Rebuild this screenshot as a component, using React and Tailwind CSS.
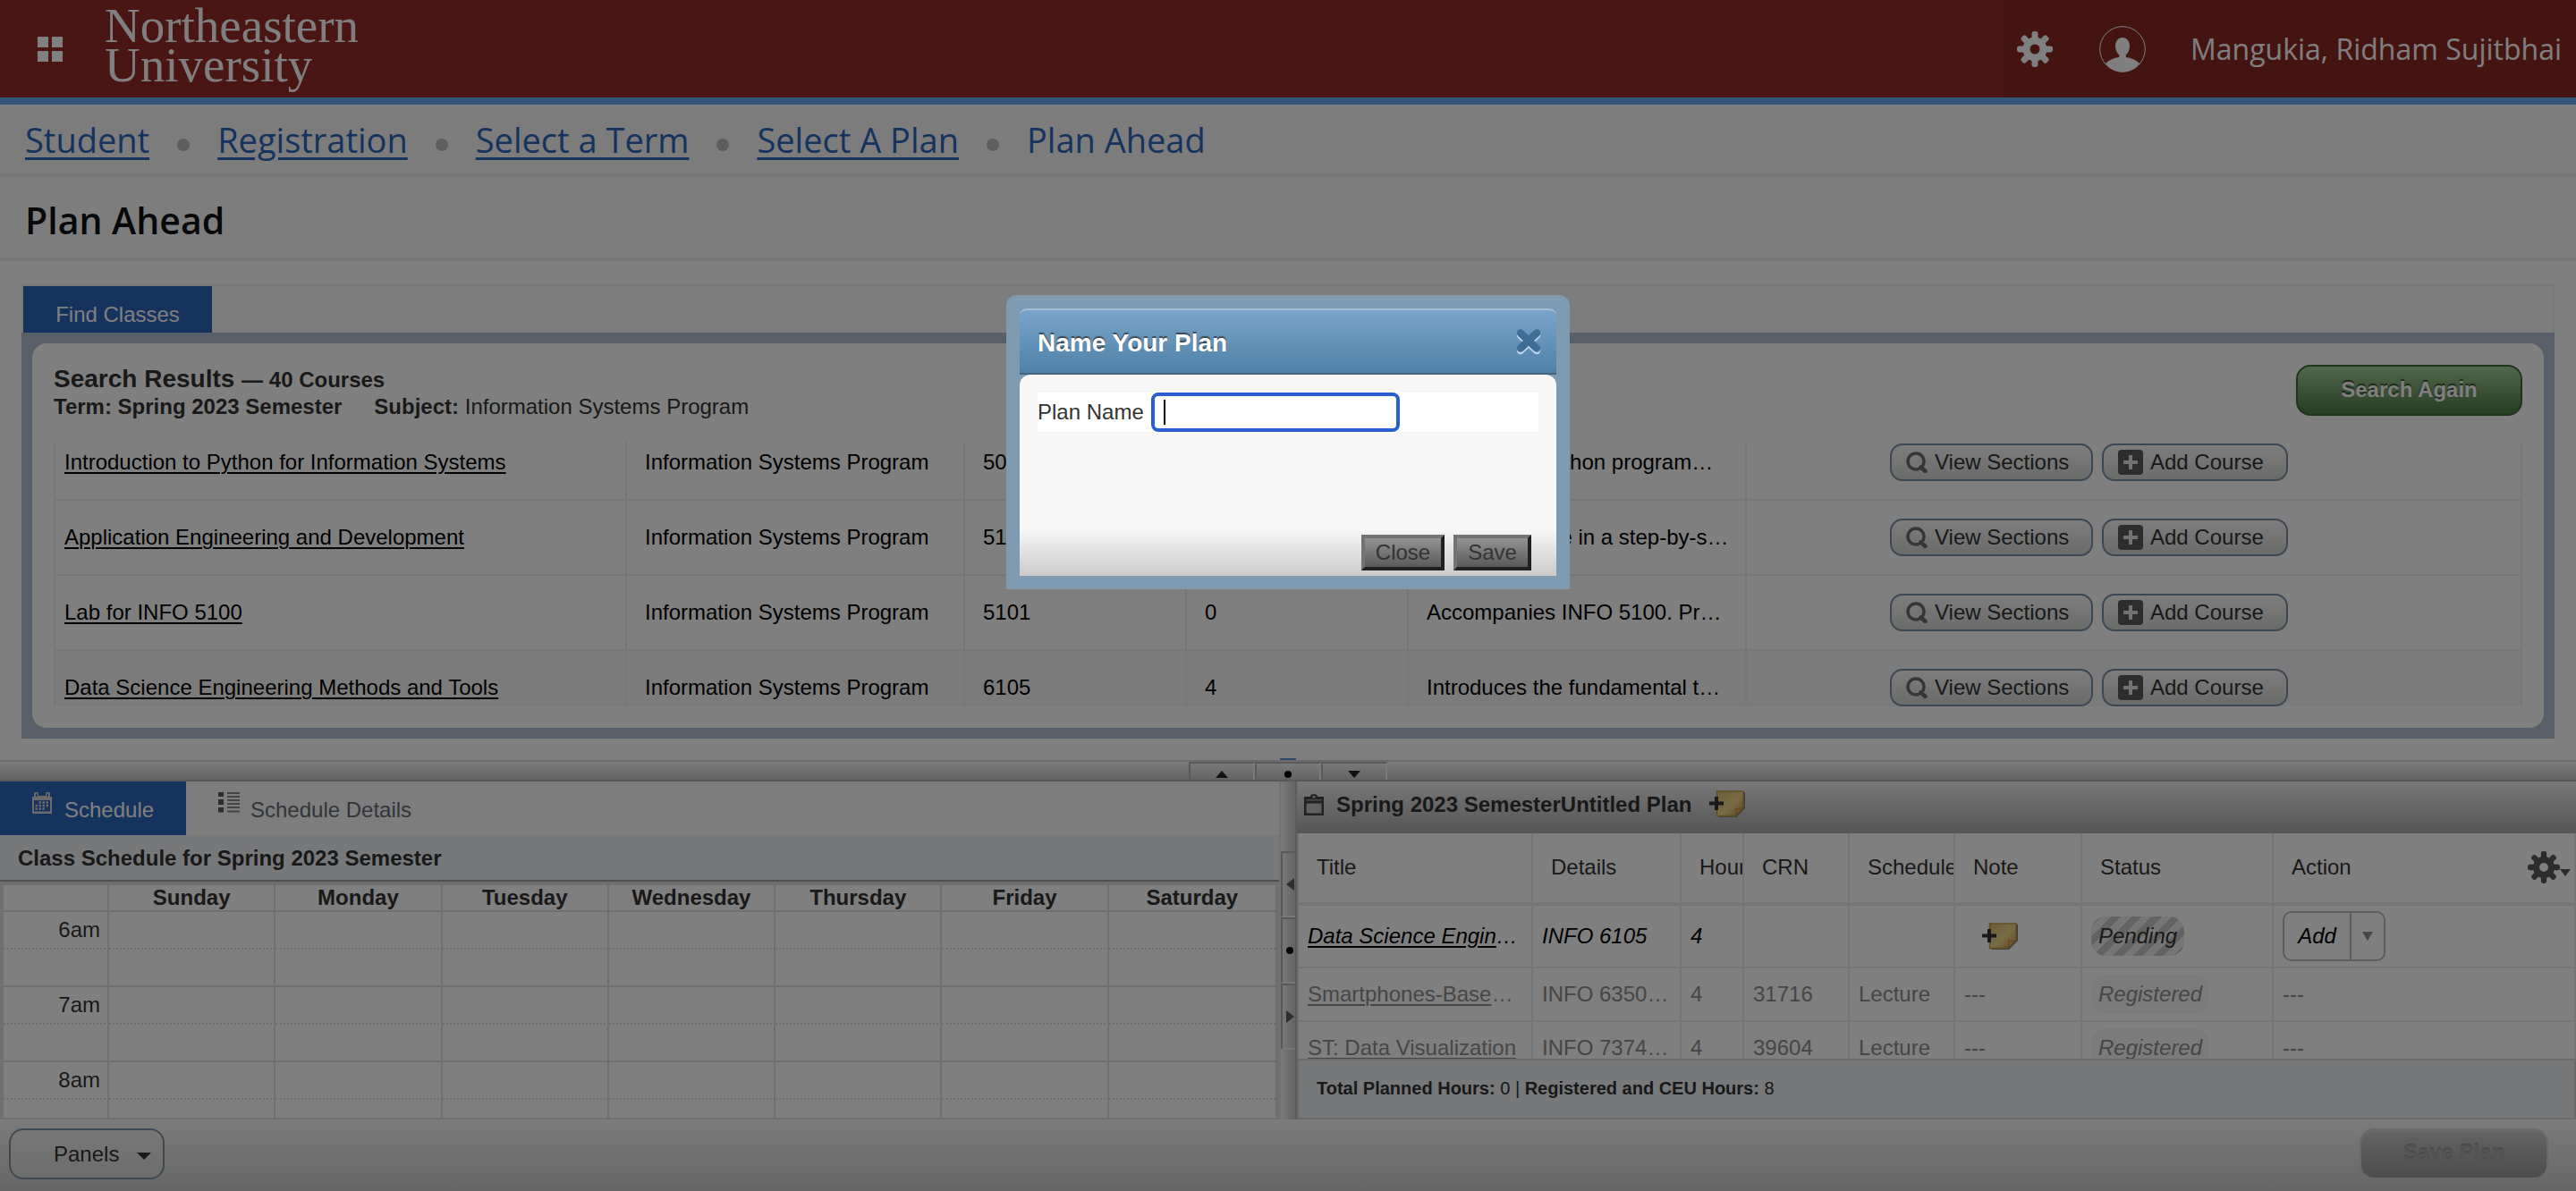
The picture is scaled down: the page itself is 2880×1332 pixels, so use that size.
import React from "react";

const crumbs = ["Student", "Registration", "Select a Term", "Select A Plan"];

const courses = [
  { title: "Introduction to Python for Information Systems", number: "5002", hours: "4", description: "Introducing Python program…" },
  { title: "Application Engineering and Development", number: "5100", hours: "4", description: "Builds software in a step-by-s…" },
  { title: "Lab for INFO 5100", number: "5101", hours: "0", description: "Accompanies INFO 5100. Pr…" },
  { title: "Data Science Engineering Methods and Tools", number: "6105", hours: "4", description: "Introduces the fundamental t…", shaded: true },
];

const days = ["Sunday", "Monday", "Tuesday", "Wednesday", "Thursday", "Friday", "Saturday"];
const times = ["6am", "7am", "8am"];

const registered = [
  { title: "Smartphones-Base", more: "…", details: "INFO 6350…", hours: "4", crn: "31716", type: "Lecture" },
  { title: "ST: Data Visualization", more: "", details: "INFO 7374…", hours: "4", crn: "39604", type: "Lecture" },
];

const planColumns = ["Title", "Details", "Hours", "CRN", "Schedule", "Note", "Status"];

function Gear({ className }) {
  return (
    <svg viewBox="0 0 40 40" className={className} aria-hidden="true">
      <circle cx="20" cy="20" r="9.5" fill="none" stroke="currentColor" strokeWidth="8" />
      {[0, 45, 90, 135, 180, 225, 270, 315].map((a) => (
        <rect key={a} x="16.5" y="0" width="7" height="10" rx="2.4" fill="currentColor" transform={`rotate(${a} 20 20)`} />
      ))}
    </svg>
  );
}

function GridIcon() {
  return (
    <svg viewBox="0 0 28 28" className="size-7" fill="currentColor" aria-hidden="true">
      <path d="M0 0h12v12H0zM16 0h12v12H16zM0 16h12v12H0zM16 16h12v12H16z" />
    </svg>
  );
}

function Avatar() {
  return (
    <svg viewBox="0 0 52 52" className="size-[52px]" aria-hidden="true">
      <circle cx="26" cy="26" r="25.3" fill="none" stroke="#fff" strokeWidth="1" />
      <path
        fill="#fff"
        d="M26 13c4.600 0 8 4 8 9.600 0 4.400-2 8-4.200 10v2.400c6 .8 11 3 15.400 7A25.300 25.300 0 0 1 26 51.500 25.300 25.300 0 0 1 6.800 42c4.400-4 9.400-6.200 15.400-7v-2.400C20 30.600 18 27 18 22.600 18 17 21.400 13 26 13z"
      />
    </svg>
  );
}

function SearchIcon() {
  return (
    <svg viewBox="0 0 24 24" className="size-6" fill="none" stroke="#6c6c6c" aria-hidden="true">
      <circle cx="11" cy="11" r="9" strokeWidth="3.500" />
      <path d="M16.500 17.500l5 4.500" strokeWidth="4.500" strokeLinecap="round" />
    </svg>
  );
}

function PlusSquare() {
  return (
    <svg viewBox="0 0 28 28" className="size-7" aria-hidden="true">
      <rect width="28" height="28" rx="4" fill="#5a5a5a" />
      <path d="M14 6v16M6 14h16" stroke="#e4e4e4" strokeWidth="4" />
    </svg>
  );
}

function CalendarIcon() {
  return (
    <svg viewBox="0 0 22 24" className="h-6 w-[22px]" aria-hidden="true">
      <path fill="#d6d6d6" d="M0 5h2V1.500C2 .7 2.700 0 3.500 0h2C6.300 0 7 .7 7 1.500V4h8V1.500c0-.8.7-1.500 1.500-1.500h2c.8 0 1.500.7 1.500 1.500V5h2v19H0z" />
      <path fill="#2c66ba" d="M2 9h18v12.500H2zM4 1.500h1.500V5H4zM16.500 1.500H18V5h-1.500z" />
      <path stroke="#d6d6d6" strokeWidth="2.500" strokeDasharray="2.500 1.500" d="M7.500 11.500h11M3.500 15h15M3.500 18.500h11" />
    </svg>
  );
}

function ListIcon() {
  return (
    <svg viewBox="0 0 24 24" className="size-6" aria-hidden="true">
      <path fill="#5a5a5a" d="M0 0h6v5H0zM0 8h6v6H0zM0 17h6v5.500H0z" />
      <path stroke="#8a8a8a" strokeWidth="1.800" d="M10 1h14M10 5h14M10 9h14M10 13h14M10 17h14M10 21.500h14" />
    </svg>
  );
}

function ClipboardIcon() {
  return (
    <svg viewBox="0 0 22 24" className="h-6 w-[22px]" aria-hidden="true">
      <path fill="#454545" d="M0 3h7V2c.8-1.300 2-2 4-2s3.200.7 4 2v1h7v21H0z" />
      <path fill="#c0c0c0" d="M9.500 2h3v2.400h-3zM2.500 10.500h17V21.500h-17z" />
      <path stroke="#9a9a9a" strokeWidth="1.500" d="M2.500 6.800h17" />
    </svg>
  );
}

function NoteIcon() {
  return (
    <svg viewBox="0 0 40 30" className="h-[30px] w-10" aria-hidden="true">
      <defs>
        <linearGradient id="note" x1="0" y1="0" x2="1" y2="1">
          <stop offset="0" stopColor="#d8bd6c" />
          <stop offset="0.55" stopColor="#f0d88e" />
          <stop offset="1" stopColor="#c08c3c" />
        </linearGradient>
      </defs>
      <path fill="#7c7c7c" d="M11 2h29v18l-10 10H11z" />
      <path fill="url(#note)" stroke="#c79a4a" strokeWidth="1.500" d="M8.500 1h29.500v18l-9 9.500H8.500z" />
      <path fill="#e4b75e" stroke="#b98a3a" d="M29 28.500c1.500-3 1.500-6 .5-8.500 3 1 6 .5 8.500-1z" />
      <path stroke="#333" strokeWidth="4" d="M8 7v15M0 14.500h16" />
    </svg>
  );
}

function Triangle({ dir, className }) {
  const d = { up: "M0 10L8 0l8 10z", down: "M0 0h16L8 10z" }[dir];
  return (
    <svg viewBox="0 0 16 10" className={className} fill="currentColor" preserveAspectRatio="none" aria-hidden="true">
      <path d={d} />
    </svg>
  );
}

function SideTriangle({ dir }) {
  return (
    <svg viewBox="0 0 9 14" className="h-3.5 w-[9px]" fill="#5c5c5c" aria-hidden="true">
      <path d={dir === "left" ? "M9 0v14L0 7z" : "M0 0v14l9-7z"} />
    </svg>
  );
}

function Header() {
  return (
    <header className="flex h-[117px] shrink-0 items-stretch justify-between border-b-8 border-[#68aaf6] bg-[#922c26] text-white">
      <div className="flex items-center pl-[42px]">
        <button aria-label="Menu"><GridIcon /></button>
        <a href="#home" className="ml-[47px] pb-2 font-['Liberation_Serif',serif] text-[55px] leading-[44px]">
          Northeastern
          <br />
          University
        </a>
      </div>
      <div className="flex items-center bg-[#882822] pr-4 pl-4 font-['Open_Sans',sans-serif]">
        <button aria-label="Settings"><Gear className="size-10" /></button>
        <button aria-label="Profile" className="ml-[52px]"><Avatar /></button>
        <span className="ml-[50px] text-[32px] leading-[44px]">Mangukia, Ridham Sujitbhai</span>
      </div>
    </header>
  );
}

function Breadcrumbs() {
  return (
    <nav className="flex h-[81px] shrink-0 items-center border-b-4 border-[#eee] bg-[#f9f9f9] px-7 font-['Open_Sans',sans-serif] text-[38px] leading-[54px] text-[#2b66bd]">
      {crumbs.map((c) => (
        <React.Fragment key={c}>
          <a href="#crumb" className="underline decoration-[3px] underline-offset-[5px]">{c}</a>
          <span className="mx-[31px] mt-3 size-3.5 rounded-full bg-[#bcbcbc]" />
        </React.Fragment>
      ))}
      <span>Plan Ahead</span>
    </nav>
  );
}

function CourseButton({ icon, width, children }) {
  return (
    <button className={`flex h-[42px] items-center gap-2 rounded-[14px] border-2 border-[#7c90a4] bg-linear-to-b from-[#fafafa] to-[#d4d8d4] pl-4 text-[#333] ${width}`}>
      {icon}
      {children}
    </button>
  );
}

function SearchResults() {
  const cell = "overflow-hidden border-r-2 border-b-2 border-[#eee] pl-5 whitespace-nowrap";
  return (
    <section className="shrink-0 px-6 pt-[26px] pb-6">
      <div className="flex h-[54px] border-2 border-b-0 border-[#f0f0f0] bg-[#fafafa]">
        <button className="w-[211px] bg-[#2c66ba] pt-3 text-white">Find Classes</button>
      </div>
      <div className="bg-[#b3bfd1] p-3">
        <div className="rounded-2xl bg-white p-6">
          <div className="flex h-[86px] items-start justify-between text-[#333]">
            <div>
              <h2 className="text-[28px] leading-8 font-bold">
                Search Results <span className="text-2xl leading-8">— 40 Courses</span>
              </h2>
              <p className="flex gap-9 leading-7">
                <b>Term: Spring 2023 Semester</b>
                <span><b>Subject:</b> Information Systems Program</span>
              </p>
            </div>
            <button className="h-[57px] w-[253px] rounded-2xl border-2 border-[#3f6a35] bg-linear-to-b from-[#a4d09a] to-[#4a7a40] pb-0.5 font-bold text-white [text-shadow:0_-2px_1px_#2f4f28]">
              Search Again
            </button>
          </div>
          <div className="h-[296px] overflow-hidden">
            <table className="-mt-[18px] w-full table-fixed border-separate border-spacing-0 border-l-2 border-[#eee] text-left text-black">
              <colgroup>
                <col className="w-[639px]" />
                <col className="w-[378px]" />
                <col className="w-[248px]" />
                <col className="w-[248px]" />
                <col className="w-[378px]" />
                <col />
              </colgroup>
              <tbody>
                {courses.map((c) => (
                  <tr key={c.title} className={c.shaded ? "h-[84px] bg-[#f7f7f7]" : "h-[84px]"}>
                    <td className="border-r-2 border-b-2 border-[#eee] px-2.5">
                      <a href="#course" className="underline decoration-2 underline-offset-[3px]">{c.title}</a>
                    </td>
                    <td className={cell}>Information Systems Program</td>
                    <td className={cell}>{c.number}</td>
                    <td className={cell}>{c.hours}</td>
                    <td className={cell}>{c.description}</td>
                    <td className="border-r-2 border-b-2 border-[#eee] pl-40">
                      <div className="flex gap-2.5">
                        <CourseButton icon={<SearchIcon />} width="w-[227px]">View Sections</CourseButton>
                        <CourseButton icon={<PlusSquare />} width="w-[208px]">Add Course</CourseButton>
                      </div>
                    </td>
                  </tr>
                ))}
              </tbody>
            </table>
          </div>
        </div>
      </div>
    </section>
  );
}

function HorizontalSplitter() {
  const btn = "flex w-[74px] items-center justify-center border-t-2 border-r-2 border-l-2 border-t-[#b4b4b4] border-r-[#f4f4f4] border-l-[#b4b4b4] pt-1.5 text-[#222]";
  return (
    <div className="relative flex h-6 shrink-0 justify-center border-t-2 border-b-2 border-t-[#d6d6d6] border-b-[#b0b0b0] bg-linear-to-b from-[#f8f8f8] to-[#c6c6c6]">
      <span className="absolute -top-1 left-1/2 h-0.5 w-[18px] -translate-x-1/2 bg-[#5a8cd2]" />
      <button aria-label="Collapse up" className={btn}><Triangle dir="up" className="h-2 w-3.5" /></button>
      <button aria-label="Reset rows" className={btn}><span className="size-2 rounded-full bg-black" /></button>
      <button aria-label="Collapse down" className={btn}><Triangle dir="down" className="h-2 w-3.5" /></button>
    </div>
  );
}

function VerticalSplitter() {
  const btn = "flex h-[74px] items-center justify-center border-t-2 border-b-2 border-l-2 border-t-[#b0b0b0] border-b-[#f0f0f0] border-l-[#b0b0b0] pl-0.5";
  return (
    <div className="flex w-5 shrink-0 flex-col justify-center border-r-2 border-l-2 border-r-[#b8b8b8] border-l-[#e4e4e4] bg-linear-to-r from-[#f4f4f4] to-[#c8c8c8]">
      <button aria-label="Collapse left" className={btn}><SideTriangle dir="left" /></button>
      <button aria-label="Reset columns" className={btn}><span className="size-2 rounded-full bg-black" /></button>
      <button aria-label="Collapse right" className={btn}><SideTriangle dir="right" /></button>
    </div>
  );
}

function SchedulePanel() {
  return (
    <section className="flex w-[1430px] shrink-0 flex-col">
      <div className="flex h-[60px] shrink-0 bg-[#fafafa] text-[#646a74]">
        <button className="flex w-[208px] items-start gap-3.5 bg-[#2c66ba] pt-3 pl-9 text-white">
          <CalendarIcon />
          <span className="leading-10">Schedule</span>
        </button>
        <button className="flex items-start gap-3 pt-3 pl-9">
          <ListIcon />
          <span className="leading-10">Schedule Details</span>
        </button>
      </div>
      <h2 className="h-[52px] shrink-0 border-b-2 border-[#9e9e9e] bg-[#ecf0f5] pl-5 leading-[52px] font-bold text-[#333]">
        Class Schedule for Spring 2023 Semester
      </h2>
      <div className="min-h-0 flex-1 overflow-hidden border-4 border-b-2 border-[#dedede]">
        <table className="w-full table-fixed border-separate border-spacing-0 text-[#333]">
          <colgroup>
            <col className="w-[118px]" />
            {days.map((d) => <col key={d} />)}
          </colgroup>
          <thead>
            <tr>
              <th className="h-[30px] border-r-2 border-b-2 border-[#dedede]" />
              {days.map((d) => (
                <th key={d} className="h-[30px] border-r-2 border-b-2 border-[#dedede] leading-7 font-bold last:border-r-0">{d}</th>
              ))}
            </tr>
          </thead>
          <tbody>
            {times.map((t) => (
              <React.Fragment key={t}>
                <tr className="h-[42px]">
                  <td className="border-r-2 border-b-2 border-[#dedede] pr-2 text-right [border-bottom-style:dotted]">{t}</td>
                  {days.map((d) => (
                    <td key={d} className="border-r-2 border-b-2 border-[#dedede] [border-bottom-style:dotted] last:border-r-0" />
                  ))}
                </tr>
                <tr className="h-[42px]">
                  <td className="border-r-2 border-b-2 border-[#dedede]" />
                  {days.map((d) => (
                    <td key={d} className="border-r-2 border-b-2 border-[#dedede] last:border-r-0" />
                  ))}
                </tr>
              </React.Fragment>
            ))}
          </tbody>
        </table>
      </div>
    </section>
  );
}

function PlanPanel() {
  const cell = "border-r-2 border-b-2 border-[#ebebeb] px-2.5 whitespace-nowrap";
  const head = "overflow-hidden border-r-2 border-b-4 border-[#ebebeb] pb-0.5 pl-5 text-left font-normal whitespace-nowrap";
  return (
    <section className="flex min-w-0 flex-1 flex-col">
      <div className="flex h-[58px] shrink-0 items-start bg-linear-to-b from-[#f0f0f0] to-[#acacac] pl-2">
        <span className="mt-3.5"><ClipboardIcon /></span>
        <h2 className="mt-3 ml-3.5 leading-7 font-bold text-[#333]">Spring 2023 SemesterUntitled Plan</h2>
        <button aria-label="Add note" className="mt-2.5 ml-5"><NoteIcon /></button>
      </div>
      <div className="min-h-0 flex-1 overflow-hidden border-l-2 border-[#dedede]">
        <table className="w-full table-fixed border-separate border-spacing-0 text-[#8c8c8c]">
          <colgroup>
            <col className="w-[262px]" />
            <col className="w-[166px]" />
            <col className="w-[70px]" />
            <col className="w-[118px]" />
            <col className="w-[118px]" />
            <col className="w-[142px]" />
            <col className="w-[214px]" />
            <col />
          </colgroup>
          <thead>
            <tr className="h-[81px] text-[#333]">
              {planColumns.map((c) => <th key={c} className={head}>{c}</th>)}
              <th className={head}>
                <div className="flex items-center justify-between pr-1">
                  Action
                  <button aria-label="Column settings" className="flex items-center text-[#585858]">
                    <Gear className="size-9" />
                    <Triangle dir="down" className="mt-3 h-2 w-3" />
                  </button>
                </div>
              </th>
            </tr>
          </thead>
          <tbody>
            <tr className="h-[70px] text-black italic">
              <td className={cell}>
                <a href="#course" className="underline decoration-2 underline-offset-[3px]">Data Science Engin</a>…
              </td>
              <td className={cell}>INFO 6105</td>
              <td className={cell}>4</td>
              <td className={cell} />
              <td className={cell} />
              <td className={cell}>
                <button aria-label="Add note" className="ml-5 block"><NoteIcon /></button>
              </td>
              <td className={cell}>
                <span className="inline-block rounded-2xl bg-[repeating-linear-gradient(135deg,#c6c6c6_0_8px,#ececec_8px_16px)] px-2 leading-[44px] text-[#333]">Pending</span>
              </td>
              <td className={cell}>
                <div className="flex h-14 w-[115px] rounded-[10px] border-2 border-[#b8b8b8]">
                  <button className="flex-1 italic">Add</button>
                  <button aria-label="More actions" className="flex w-[38px] items-center justify-center border-l-2 border-[#b8b8b8] text-[#8c8c8c]">
                    <Triangle dir="down" className="h-2.5 w-3" />
                  </button>
                </div>
              </td>
            </tr>
            {registered.map((r) => (
              <tr key={r.crn} className="h-[60px]">
                <td className={cell}>
                  <a href="#course" className="underline decoration-2 underline-offset-[3px]">{r.title}</a>{r.more}
                </td>
                <td className={cell}>{r.details}</td>
                <td className={cell}>{r.hours}</td>
                <td className={cell}>{r.crn}</td>
                <td className={cell}>{r.type}</td>
                <td className={cell}>---</td>
                <td className={cell}>
                  <span className="inline-block rounded-2xl bg-[#f7f7f7] px-2 leading-[44px] italic">Registered</span>
                </td>
                <td className={cell}>---</td>
              </tr>
            ))}
          </tbody>
        </table>
      </div>
      <div className="h-[68px] shrink-0 border-2 border-[#d4d4d4] bg-[#ecf0f5] pl-5 text-xl leading-[62px] text-[#333]">
        <b>Total Planned Hours:</b> 0 | <b>Registered and CEU Hours:</b> 8
      </div>
    </section>
  );
}

function BottomBar() {
  return (
    <footer className="flex h-20 shrink-0 items-start justify-between bg-linear-to-b from-[#f8f8f8] to-[#cccccc] pt-2.5 pr-[31px] pl-2.5">
      <button className="flex h-[57px] w-[174px] items-center rounded-2xl border-2 border-[#7c90a4] bg-linear-to-b from-[#f0f0f0] to-[#d6dad6] pl-12 text-[#333]">
        Panels
        <Triangle dir="down" className="mt-1 ml-5 h-2 w-4" />
      </button>
      <button disabled className="h-[57px] w-[211px] rounded-2xl border-2 border-t-4 border-[#d2d2d2] bg-linear-to-b from-[#c6c6c6] to-[#9c9c9c] pb-1 font-bold text-[#a8a8a8] [text-shadow:0_-2px_1px_#949494]">
        Save Plan
      </button>
    </footer>
  );
}

function NamePlanDialog() {
  const action = "h-10 border-4 border-t-[#737373] border-r-[#202020] border-b-[#202020] border-l-[#737373] bg-linear-to-b from-[#949494] to-[#5a5a5a] text-[#333]";
  return (
    <div className="fixed inset-0 flex items-start justify-center bg-black/50 pt-[330px]">
      <div role="dialog" aria-labelledby="dialog-title" className="w-[630px] rounded-t-xl bg-[#7f9bb2] p-[15px]">
        <div className="flex h-[74px] items-center justify-between rounded-t-lg border-t-2 border-b-2 border-t-[#a5c0d6] border-b-[#43627c] bg-linear-to-b from-[#7aa4c9] to-[#4f81a8] pr-4 pl-5">
          <h2 id="dialog-title" className="pt-1 text-[28px] leading-8 font-bold text-white [text-shadow:0_-2px_1px_#3a4650]">Name Your Plan</h2>
          <button aria-label="Close dialog">
            <svg viewBox="0 0 30 30" className="size-[30px]" fill="none" strokeWidth="8.500" strokeLinecap="round" aria-hidden="true">
              <path stroke="#b9d4ec" d="M6 8l18 17M24 8L6 25" />
              <path stroke="#3f6d96" d="M6 5.500l18 17M24 5.500L6 22.500" />
            </svg>
          </button>
        </div>
        <form className="flex h-[225px] flex-col justify-between rounded-t-xl bg-[#f7f7f7]" onSubmit={(e) => e.preventDefault()}>
          <div className="mx-5 mt-5 flex h-11 items-center bg-white text-[#333]">
            <label htmlFor="plan-name">Plan Name</label>
            <div className="relative ml-2">
              <input id="plan-name" type="text" className="block h-11 w-[278px] rounded-lg border-4 border-[#2860cf] bg-white px-2.5 ring-2 ring-white outline-none" />
              <span className="absolute top-2 left-3.5 h-7 w-0.5 bg-black" />
            </div>
          </div>
          <div className="flex h-[52px] justify-end gap-2.5 bg-linear-to-b from-[#f7f7f7] to-[#cbcbcb] pt-1.5 pr-7">
            <button type="button" className={`${action} w-[93px]`}>Close</button>
            <button type="submit" className={`${action} w-[87px]`}>Save</button>
          </div>
        </form>
      </div>
    </div>
  );
}

export default function App() {
  return (
    <div className="flex h-screen flex-col overflow-hidden bg-white font-['Liberation_Sans',Arial,sans-serif] text-2xl leading-7">
      <Header />
      <Breadcrumbs />
      <div className="flex h-[94px] shrink-0 items-center border-b-4 border-[#eee] bg-[#fafafa] pt-1.5 pl-7">
        <h1 className="font-['Open_Sans',sans-serif] text-[41px] leading-[54px] font-semibold text-[#111]">Plan Ahead</h1>
      </div>
      <SearchResults />
      <HorizontalSplitter />
      <main className="flex min-h-0 flex-1">
        <SchedulePanel />
        <VerticalSplitter />
        <PlanPanel />
      </main>
      <BottomBar />
      <NamePlanDialog />
    </div>
  );
}
